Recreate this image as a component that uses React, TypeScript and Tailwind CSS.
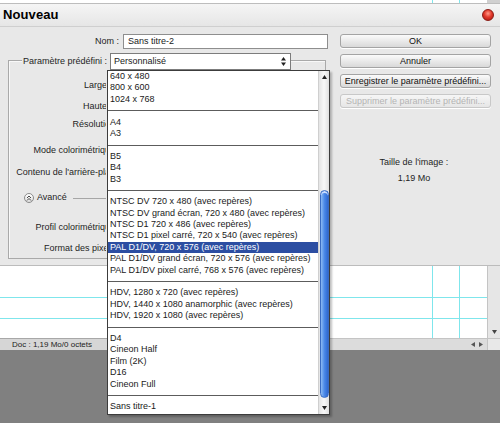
import React from "react";

const groups: string[][] = [
  ["640 x 480", "800 x 600", "1024 x 768"],
  ["A4", "A3"],
  ["B5", "B4", "B3"],
  [
    "NTSC DV 720 x 480 (avec repères)",
    "NTSC DV grand écran, 720 x 480 (avec repères)",
    "NTSC D1 720 x 486 (avec repères)",
    "NTSC D1 pixel carré, 720 x 540 (avec repères)",
    "PAL D1/DV, 720 x 576 (avec repères)",
    "PAL D1/DV grand écran, 720 x 576 (avec repères)",
    "PAL D1/DV pixel carré, 768 x 576 (avec repères)",
  ],
  [
    "HDV, 1280 x 720 (avec repères)",
    "HDV, 1440 x 1080 anamorphic (avec repères)",
    "HDV, 1920 x 1080 (avec repères)",
  ],
  ["D4", "Cineon Half", "Film (2K)", "D16", "Cineon Full"],
  ["Sans titre-1"],
];

const SELECTED = "PAL D1/DV, 720 x 576 (avec repères)";

function Btn({ children, disabled }: { children: React.ReactNode; disabled?: boolean }) {
  return (
    <div
      className={
        "h-[14px] w-[151px] rounded-[3px] border flex items-center justify-center text-[9px] leading-none bg-linear-to-b shadow-[0_1px_0_#ffffff] " +
        (disabled
          ? "border-[#c8c8c8] from-[#f6f6f6] to-[#e6e6e6] text-[#b4b4b4]"
          : "border-[#a4a4a4] from-[#fbfbfb] to-[#d9d9d9] text-[#111]")
      }
    >
      {children}
    </div>
  );
}

function Label({ children }: { children: React.ReactNode }) {
  return (
    <div className="w-[97px] overflow-hidden">
      <div className="w-[111px] text-right whitespace-nowrap text-[9px] leading-[14px] text-[#1e1e1e]">
        {children}
      </div>
    </div>
  );
}

export default function App() {
  return (
    <div className="relative w-[500px] h-[423px] overflow-hidden bg-[#808080] font-['Liberation_Sans',Arial,sans-serif] text-[#1a1a1a]">
      {/* top strip: canvas behind dialog */}
      <div className="flex h-[4px] bg-white border-b border-[#bdbdbd]">
        <div className="w-[432px]" />
        <div className="w-px bg-[#7fe6ec]" />
        <div className="w-[26px]" />
        <div className="w-px bg-[#7fe6ec]" />
        <div className="w-[27px]" />
        <div className="flex-1 bg-[#d0d0d0]" />
      </div>

      {/* title bar */}
      <div className="flex h-[23px] items-center justify-between bg-linear-to-b from-[#f5f5f5] to-[#e6e6e6] border-b border-[#cfcfcf] pl-[3px] pr-[6px]">
        <span className="text-[13px] font-bold text-black tracking-[0.1px]">Nouveau</span>
        <div className="w-[12px] h-[12px] rounded-full bg-[radial-gradient(circle_at_50%_35%,#ff9a8a_0%,#e23a2c_45%,#a81410_100%)] border border-[#8a1a14]" />
      </div>

      {/* dialog body */}
      <div className="flex h-[239px] bg-[#e8e8e8] border-b border-[#bcbcbc]">
        {/* left column */}
        <div className="w-[333px] pt-[7px]">
          <div className="flex h-[15px] items-center">
            <div className="w-[119px] text-right text-[9px] text-[#1e1e1e]">Nom :</div>
            <div className="ml-[4px] w-[205px] h-[15px] bg-white border border-[#8e8e8e] flex items-center pl-[4px] text-[9px]">
              Sans titre-2
            </div>
          </div>

          {/* group box */}
          <div className="mt-[11px] ml-[8px] w-[318px] h-[199px] border border-[#a9a9a9] shadow-[inset_1px_1px_0_#f8f8f8]">
            <div className="-mt-[8px] ml-[13px] flex h-[17px] items-center">
              <div className="bg-[#e8e8e8] pr-[3px] pl-px text-[9px] whitespace-nowrap text-[#1e1e1e]">
                Paramètre prédéfini :
              </div>
              <div className="w-[181px] h-[17px] bg-white border border-[#7c7c7c] flex items-center justify-between pl-[3px] pr-[3px] text-[9px]">
                <span>Personnalisé</span>
                <svg width="7" height="11" viewBox="0 0 7 11">
                  <path d="M3.5 1 L6 4.5 L1 4.5 Z" fill="#222" />
                  <path d="M3.5 10 L6 6.5 L1 6.5 Z" fill="#222" />
                </svg>
              </div>
            </div>
            <div className="mt-[8px] h-[14px] flex"><Label>Largeur :</Label></div>
            <div className="mt-[7px] h-[14px] flex"><Label>Hauteur :</Label></div>
            <div className="mt-[4px] h-[14px] flex"><Label>Résolution :</Label></div>
            <div className="mt-[12px] h-[14px] flex"><Label>Mode colorimétrique :</Label></div>
            <div className="mt-[8px] h-[14px] flex"><Label>Contenu de l'arrière-plan :</Label></div>
            <div className="mt-[12px] h-[14px] flex items-center w-[97px]">
              <div className="ml-[15px] w-[10px] h-[10px] rounded-full border border-[#8c8c8c] bg-linear-to-b from-white to-[#dedede] flex items-center justify-center">
                <svg width="6" height="6" viewBox="0 0 6 6">
                  <path d="M1 3 L3 1 L5 3 M1 5.5 L3 3.5 L5 5.5" stroke="#333" strokeWidth="0.9" fill="none" />
                </svg>
              </div>
              <span className="ml-[3px] text-[9px] text-[#1e1e1e]">Avancé</span>
              <div className="ml-[6px] flex-1 h-px bg-[#a6a6a6]" />
            </div>
            <div className="mt-[15px] h-[14px] flex"><Label>Profil colorimétrique :</Label></div>
            <div className="mt-[7px] h-[14px] flex"><Label>Format des pixels :</Label></div>
          </div>
        </div>

        {/* right column */}
        <div className="flex-1 pl-[7px] pt-[7px]">
          <div className="flex flex-col gap-[6px]">
            <Btn>OK</Btn>
            <Btn>Annuler</Btn>
            <Btn>Enregistrer le paramètre prédéfini...</Btn>
            <Btn disabled>Supprimer le paramètre prédéfini...</Btn>
          </div>
          <div className="w-[148px] mt-[49px] text-center text-[9px] leading-[11px] text-[#1e1e1e]">
            Taille de l'image :
          </div>
          <div className="w-[148px] mt-[5px] text-center text-[9px] leading-[11px] text-[#1e1e1e]">
            1,19 Mo
          </div>
        </div>
      </div>

      {/* document windows */}
      <div className="flex h-[84px]">
        <div className="w-[330px] flex flex-col">
          <div className="h-[72px] bg-white">
            <div className="h-[31px]" />
            <div className="h-px bg-[#7fe6ec]" />
            <div className="h-[20px]" />
            <div className="h-px bg-[#7fe6ec]" />
          </div>
          <div className="h-[12px] bg-[#d6d6d6] border-t border-[#a8a8a8] flex items-center pl-[12px] text-[8px] leading-none text-[#222]">
            Doc : 1,19 Mo/0 octets
          </div>
        </div>
        <div className="flex-1 flex flex-col">
          <div className="h-[72px] flex">
            <div className="relative flex-1 bg-white overflow-hidden">
              <div className="absolute left-0 right-0 top-[31px] h-px bg-[#7fe6ec]" />
              <div className="absolute left-0 right-0 top-[52px] h-px bg-[#7fe6ec]" />
              <div className="absolute top-0 bottom-0 left-[102px] w-px bg-[#7fe6ec]" />
              <div className="absolute top-0 bottom-0 left-[129px] w-px bg-[#7fe6ec]" />
            </div>
            <div className="w-[13px] bg-[#e6e6e6] border-l border-[#c4c4c4] flex flex-col justify-end items-center pb-[4px]">
              <svg width="5" height="4" viewBox="0 0 5 4">
                <path d="M0 0 L5 0 L2.5 4 Z" fill="#444" />
              </svg>
            </div>
          </div>
          <div className="h-[12px] bg-[#dcdcdc] border-t border-[#c4c4c4] flex items-center justify-end">
            <svg width="12" height="5" viewBox="0 0 12 5" className="mr-[4px]">
              <path d="M0 2.5 L4 0 L4 5 Z" fill="#555" />
              <path d="M12 2.5 L8 0 L8 5 Z" fill="#555" />
            </svg>
            <div className="w-[13px] h-full bg-[#e8e8e8] border-l border-[#c4c4c4]" />
          </div>
        </div>
      </div>

      {/* dropdown list overlay */}
      <div className="absolute left-[107px] top-[70px] w-[223px] h-[345px] bg-white border border-[#3c3c3c] flex shadow-[2px_2px_2px_rgba(0,0,0,0.25)]">
        <div className="flex-1 min-w-0 flex flex-col">
          {groups.map((g, gi) => (
            <React.Fragment key={gi}>
              {gi > 0 && (
                <div className="h-[11.4px] flex items-center">
                  <div className="h-px w-full bg-[#5c5c5c]" />
                </div>
              )}
              {g.map((item) => (
                <div
                  key={item}
                  className={
                    "h-[11.4px] leading-[11.4px] pl-[2px] text-[9px] whitespace-nowrap overflow-hidden " +
                    (item === SELECTED ? "bg-[#2c4ea2] text-white" : "text-[#1a1a1a]")
                  }
                >
                  {item}
                </div>
              ))}
            </React.Fragment>
          ))}
        </div>
        <div className="w-[11px] flex flex-col bg-linear-to-r from-[#e4e4e4] via-[#f8f8f8] to-[#e0e0e0] border-l border-[#cfcfcf]">
          <div className="h-[12px] flex items-center justify-center">
            <svg width="5" height="4" viewBox="0 0 5 4">
              <path d="M0 4 L5 4 L2.5 0 Z" fill="#222" />
            </svg>
          </div>
          <div className="flex-1 flex flex-col items-center">
            <div className="mt-[107px] w-[9px] h-[208px] rounded-full bg-linear-to-r from-[#8cbaf4] via-[#4a88e8] to-[#2f68d0] border border-[#3a6cc4] shadow-[inset_0_2px_0_#c8dcff]" />
          </div>
          <div className="h-[12px] flex items-center justify-center">
            <svg width="5" height="4" viewBox="0 0 5 4">
              <path d="M0 0 L5 0 L2.5 4 Z" fill="#222" />
            </svg>
          </div>
        </div>
      </div>
    </div>
  );
}
